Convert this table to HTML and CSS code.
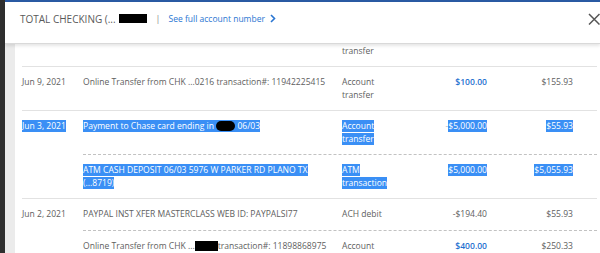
FILE: index.html
```html
<!DOCTYPE html>
<html lang="en">
<head>
<meta charset="utf-8">
<title>Total Checking</title>
<link rel="stylesheet" href="styles.css">
</head>
<body>
<div class="rail"></div>
<div class="modal">
  <div class="topbar"></div>
  <header class="head">
    <span class="title">TOTAL CHECKING (...</span>
    <span class="redact-head"></span>
    <span class="pipe">|</span>
    <a class="link" href="#">See full account number
      <svg class="chev" width="6" height="9" viewBox="0 0 6 9"><path d="M1 1 L4.5 4.5 L1 8" fill="none" stroke="#2a76d2" stroke-width="1.6"/></svg>
    </a>
    <span class="spacer"></span>
    <svg class="close" width="12" height="12" viewBox="0 0 12 12"><path d="M1 1 L11.5 11.5 M11.5 1 L1 11.5" stroke="#555" stroke-width="1.5"/></svg>
  </header>
  <div class="body">
    <div class="gutter"></div>
    <div class="content">
      <div class="list">
        <div class="group">
          <div class="date"></div>
          <div class="subs">
            <div class="sub">
              <div class="desc"></div>
              <div class="type">Account transfer</div>
              <div class="amt"></div>
              <div class="bal"></div>
            </div>
          </div>
        </div>

        <div class="group">
          <div class="date">Jun 9, 2021</div>
          <div class="subs">
            <div class="sub">
              <div class="desc">Online Transfer from CHK ...0216 transaction#: 11942225415</div>
              <div class="type">Account transfer</div>
              <div class="amt credit">$100.00</div>
              <div class="bal">$155.93</div>
            </div>
          </div>
        </div>

        <div class="group">
          <div class="date"><span class="sel">Jun 3, 2021</span></div>
          <div class="subs">
            <div class="sub">
              <div class="desc"><span class="sel">Payment to Chase card ending in <span class="blot"></span> 06/03</span></div>
              <div class="type"><span class="sel">Account transfer</span></div>
              <div class="amt"><span class="minus">-</span><span class="sel">$5,000.00</span></div>
              <div class="bal"><span class="sel">$55.93</span></div>
            </div>
            <div class="sub">
              <div class="desc"><span class="sel">ATM CASH DEPOSIT 06/03 5976 W PARKER RD PLANO TX (...8719)</span></div>
              <div class="type"><span class="sel">ATM transaction</span></div>
              <div class="amt"><span class="sel">$5,000.00</span></div>
              <div class="bal"><span class="sel">$5,055.93</span></div>
            </div>
          </div>
        </div>

        <div class="group">
          <div class="date">Jun 2, 2021</div>
          <div class="subs">
            <div class="sub">
              <div class="desc">PAYPAL INST XFER MASTERCLASS WEB ID: PAYPALSI77</div>
              <div class="type">ACH debit</div>
              <div class="amt">-$194.40</div>
              <div class="bal">$55.93</div>
            </div>
            <div class="sub">
              <div class="desc">Online Transfer from CHK ...<span class="box"></span>transaction#: 11898868975</div>
              <div class="type">Account transfer</div>
              <div class="amt credit">$400.00</div>
              <div class="bal">$250.33</div>
            </div>
          </div>
        </div>
      </div>
    </div>
  </div>
</div>
</body>
</html>
```

FILE: styles.css
```css
* { box-sizing: border-box; }
html, body { margin: 0; height: 100%; }
body {
  display: flex;
  height: 253px;
  overflow: hidden;
  background: #fff;
  font-family: "Open Sans", "DejaVu Sans", sans-serif;
  color: #5e5e5e;
}
.rail {
  width: 5px;
  flex: none;
  background: #2f2f2f;
}
.modal {
  flex: 1;
  display: flex;
  flex-direction: column;
  min-width: 0;
}
.topbar {
  height: 2px;
  flex: none;
  background: #2a5aa3;
}
.head {
  position: relative;
  z-index: 2;
  height: 42px;
  flex: none;
  display: flex;
  align-items: center;
  padding: 0 0 8px 15px;
  background: #fff;
  border-bottom: 1px solid #d9d9d9;
  box-shadow: 0 2px 3px rgba(0, 0, 0, 0.10);
}
.title {
  font-size: 10px;
  color: #5a5a5a;
}
.redact-head {
  display: inline-block;
  width: 28px;
  height: 9px;
  margin-left: 3px;
  background: #000;
}
.pipe {
  font-size: 9px;
  color: #8a8a8a;
  margin-left: 9px;
}
.link {
  display: flex;
  align-items: center;
  gap: 5px;
  margin-left: 8px;
  font-size: 8.5px;
  color: #2a76d2;
  text-decoration: none;
}
.chev { display: block; }
.spacer { flex: 1; }
.close { display: block; margin-top: 1px; }

.body {
  flex: 1;
  display: flex;
  min-height: 0;
}
.gutter {
  width: 10px;
  flex: none;
  background: #ebebeb;
}
.content {
  flex: 1;
  overflow: hidden;
  padding: 0 3px 0 7px;
}
.list {
  margin-top: -21px;
  font-size: 8.55px;
  line-height: 13.2px;
}
.group {
  display: flex;
  border-bottom: 1px solid #e2e2e2;
}
.date {
  width: 61px;
  flex: none;
  padding-top: 9px;
}
.subs { flex: 1; }
.sub {
  display: grid;
  grid-template-columns: 259px 55px 90px 86px;
  padding: 9px 0 7.5px;
  min-height: 31px;
}
.sub + .sub { border-top: 1px dashed #c2c2c2; }
.desc { padding-right: 10px; }
.amt, .bal { text-align: right; }
.credit { color: #1f72d0; font-weight: 600; }
.sel {
  background: #3a8ff5;
  color: #fff;
}
.minus { color: #b8b8b8; }
.blot {
  display: inline-block;
  width: 19px;
  height: 10px;
  vertical-align: -2px;
  border-radius: 5px;
  background: #000;
}
.box {
  display: inline-block;
  width: 23px;
  height: 10px;
  vertical-align: -2px;
  background: #000;
}
```
